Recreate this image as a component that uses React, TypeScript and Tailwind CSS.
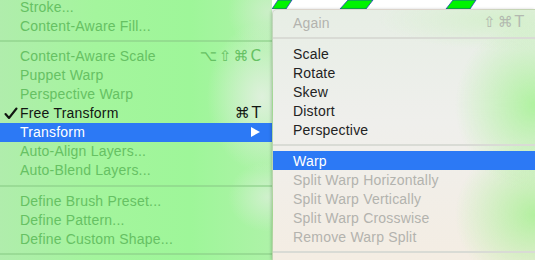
import React from "react";

type Row = { label: string; enabled?: boolean; check?: boolean; shortcut?: string[]; arrow?: boolean; active?: boolean };
type Item = Row | "sep";

const leftItems: Item[] = [
  { label: "Stroke..." },
  { label: "Content-Aware Fill..." },
  "sep",
  { label: "Content-Aware Scale", shortcut: ["⌥", "⇧", "⌘", "C"] },
  { label: "Puppet Warp" },
  { label: "Perspective Warp" },
  { label: "Free Transform", enabled: true, check: true, shortcut: ["⌘", "T"] },
  { label: "Transform", enabled: true, active: true, arrow: true },
  { label: "Auto-Align Layers..." },
  { label: "Auto-Blend Layers..." },
  "sep",
  { label: "Define Brush Preset..." },
  { label: "Define Pattern..." },
  { label: "Define Custom Shape..." },
  "sep",
];

const rightItems: Item[] = [
  { label: "Again", shortcut: ["⇧", "⌘", "T"] },
  "sep",
  { label: "Scale", enabled: true },
  { label: "Rotate", enabled: true },
  { label: "Skew", enabled: true },
  { label: "Distort", enabled: true },
  { label: "Perspective", enabled: true },
  "sep",
  { label: "Warp", enabled: true, active: true },
  { label: "Split Warp Horizontally" },
  { label: "Split Warp Vertically" },
  { label: "Split Warp Crosswise" },
  { label: "Remove Warp Split" },
  "sep",
];

function Shortcut({ keys, color }: { keys: string[]; color: string }) {
  return (
    <span className={`flex items-center gap-[2px] ${color}`} style={{ fontFamily: '"DejaVu Sans", "Liberation Sans", sans-serif' }}>
      {keys.map((k, i) => (
        <span key={i} className="text-[15px] leading-none">{k}</span>
      ))}
    </span>
  );
}

function LeftMenu() {
  return (
    <div className="w-[272px] h-[263px] shrink-0 flex flex-col -mt-[3px] bg-[radial-gradient(ellipse_55px_75px_at_262px_100px,rgba(228,240,226,0.9),rgba(228,240,226,0)),radial-gradient(ellipse_40px_35px_at_268px_200px,rgba(222,240,220,0.7),rgba(222,240,220,0)),radial-gradient(ellipse_40px_40px_at_268px_15px,rgba(215,238,212,0.7),rgba(215,238,212,0)),linear-gradient(to_right,#b0edac,#a4f59d_35%,#9ef699_70%,#aef2a8)]">
      {leftItems.map((it, i) =>
        it === "sep" ? (
          <div key={i} className="h-[12px] flex items-center">
            <div className="h-[2px] w-full bg-[#8ccf89]/60" />
          </div>
        ) : (
          <div
            key={i}
            className={`h-[19px] shrink-0 flex items-center pr-[11px] ${it.active ? "bg-[#2c79f5] text-white" : it.enabled ? "text-[#121712]" : "text-[#66c163]"}`}
          >
            <div className="w-[20px] shrink-0 flex justify-center">
              {it.check && (
                <svg width="14" height="13" viewBox="0 0 14 13" className="ml-[2px]">
                  <path d="M1.5 7 L5 11 L12.5 1.5" fill="none" stroke="#121712" strokeWidth="2.1" strokeLinecap="round" strokeLinejoin="round" />
                </svg>
              )}
            </div>
            <span className="flex-1 text-[14px] tracking-[0.2px] leading-none">{it.label}</span>
            {it.shortcut && <Shortcut keys={it.shortcut} color={it.enabled ? "text-[#121712]" : "text-[#66c163]"} />}
            {it.arrow && (
              <svg width="9" height="10" viewBox="0 0 9 10" className="mr-[1px]">
                <path d="M0 0 L9 5 L0 10 Z" fill="white" />
              </svg>
            )}
          </div>
        )
      )}
    </div>
  );
}

function Stripes() {
  return (
    <div className="h-[9px] shrink-0 bg-white">
      <svg width="263" height="9" viewBox="0 0 263 9" className="block">
        <g fill="#00f400" stroke="#2a40c0" strokeWidth="0.8">
          <polygon points="0,9 14,9 20,0 6,0" />
          <polygon points="68,9 94,9 101,0 76,0" />
          <polygon points="174,9 198,9 204,0 181,0" />
        </g>
      </svg>
    </div>
  );
}

function SubMenu() {
  return (
    <div className="flex-1 rounded-tl-[5px] border-l border-t border-black/10 shadow-[-1px_0_3px_rgba(0,0,0,0.18)] pt-[3px] flex flex-col bg-[radial-gradient(ellipse_80px_85px_at_100%_95px,rgba(172,242,156,0.95),rgba(172,242,156,0)),radial-gradient(ellipse_80px_75px_at_100%_205px,rgba(172,240,152,0.9),rgba(172,240,152,0)),radial-gradient(ellipse_130px_30px_at_90%_10px,rgba(208,240,198,0.8),rgba(208,240,198,0)),linear-gradient(to_bottom,#e7eee5,#efefec_45%,#f4ede3)]">
      {rightItems.map((it, i) =>
        it === "sep" ? (
          <div key={i} className="h-[12px] flex items-center">
            <div className="h-[2px] w-full bg-[#d9dbd5]" />
          </div>
        ) : (
          <div
            key={i}
            className={`h-[19px] shrink-0 flex items-center pl-[20px] pr-[11px] ${it.active ? "bg-[#2c79f5] text-white" : it.enabled ? "text-[#232323]" : "text-[#b3b3ae]"}`}
          >
            <span className="flex-1 text-[14px] tracking-[0.2px] leading-none">{it.label}</span>
            {it.shortcut && <Shortcut keys={it.shortcut} color="text-[#b3b9b0]" />}
          </div>
        )
      )}
    </div>
  );
}

export default function App() {
  return (
    <div className="w-[535px] h-[260px] overflow-hidden flex" style={{ fontFamily: '"Liberation Sans", "DejaVu Sans", sans-serif' }}>
      <LeftMenu />
      <div className="flex-1 flex flex-col">
        <Stripes />
        <SubMenu />
      </div>
    </div>
  );
}
